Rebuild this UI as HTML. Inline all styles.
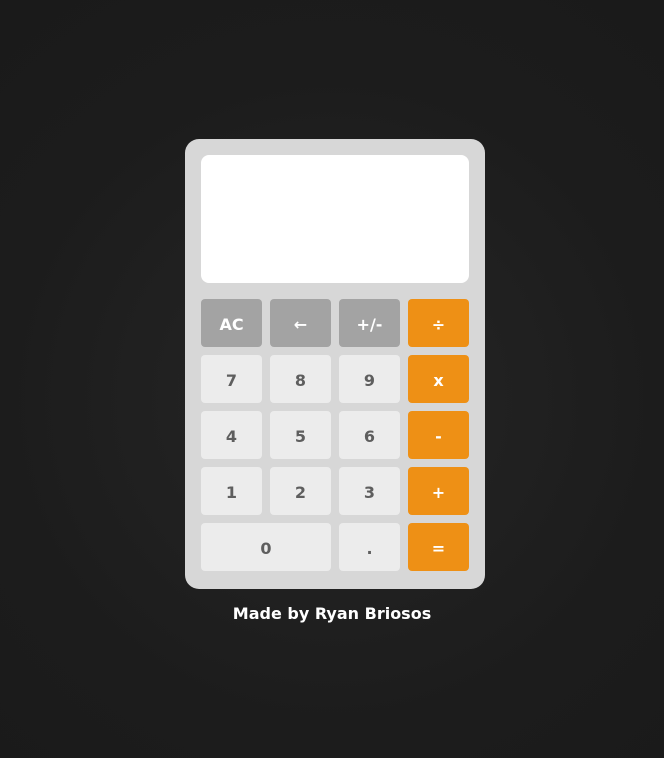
<!DOCTYPE html>
<html><head><style>
html,body{margin:0;height:100%}
body{width:664px;height:758px;background:radial-gradient(circle at 332px 400px,#262626 0,#1c1c1c 330px,#1a1a1a 100%);position:relative;font-family:"DejaVu Sans","Liberation Sans",sans-serif;overflow:hidden}
.calc{position:absolute;left:185px;top:139px;width:300px;height:450px;background:#d7d7d7;border-radius:14px}
.disp{position:absolute;left:16px;top:16px;width:268px;height:128px;background:#fff;border-radius:8px}
.b{position:absolute;width:61px;height:46px;padding-top:2px;border-radius:4px;background:#ececec;color:#5e5e5e;font-weight:bold;font-size:16px;display:flex;align-items:center;justify-content:center}
.g{background:#a3a3a3;color:#fff}.o{background:#ee9015;color:#fff}
.foot{position:absolute;top:604px;left:0;width:664px;text-align:center;color:#fff;font-weight:bold;font-size:16px}
</style></head><body>
<div class="calc"><div class="disp"></div>
<div class="b g" style="left:16px;top:160px">AC</div>
<div class="b g" style="left:85px;top:160px">←</div>
<div class="b g" style="left:154px;top:160px">+/-</div>
<div class="b o" style="left:223px;top:160px">÷</div>
<div class="b" style="left:16px;top:216px">7</div>
<div class="b" style="left:85px;top:216px">8</div>
<div class="b" style="left:154px;top:216px">9</div>
<div class="b o" style="left:223px;top:216px">x</div>
<div class="b" style="left:16px;top:272px">4</div>
<div class="b" style="left:85px;top:272px">5</div>
<div class="b" style="left:154px;top:272px">6</div>
<div class="b o" style="left:223px;top:272px">-</div>
<div class="b" style="left:16px;top:328px">1</div>
<div class="b" style="left:85px;top:328px">2</div>
<div class="b" style="left:154px;top:328px">3</div>
<div class="b o" style="left:223px;top:328px">+</div>
<div class="b" style="left:16px;top:384px;width:130px">0</div>
<div class="b" style="left:154px;top:384px">.</div>
<div class="b o" style="left:223px;top:384px">=</div>
</div>
<div class="foot">Made by Ryan Briosos</div>
</body></html>
